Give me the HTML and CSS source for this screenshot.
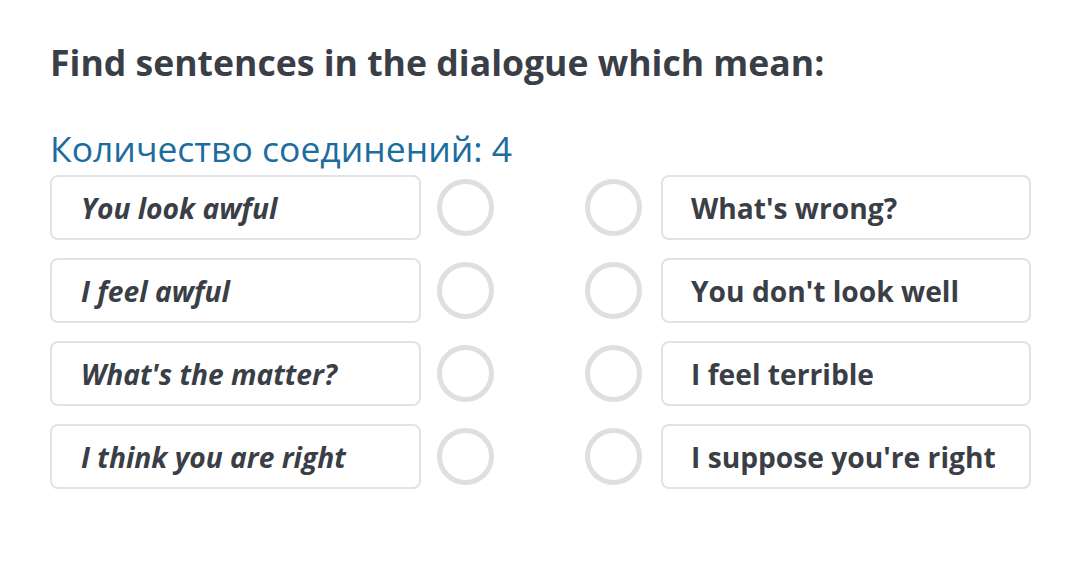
FILE: index.html
```html
<!DOCTYPE html>
<html lang="en">
<head>
<meta charset="utf-8">
<title>Find sentences</title>
<link rel="stylesheet" href="styles.css">
</head>
<body>
<main class="task">
  <h1 class="title">Find sentences in the dialogue which mean:</h1>
  <p class="count">Количество соединений: 4</p>
  <div class="pairs">
    <div class="row">
      <div class="card card-left">You look awful</div>
      <span class="dot dot-left"></span>
      <span class="dot dot-right"></span>
      <div class="card card-right">What's wrong?</div>
    </div>
    <div class="row">
      <div class="card card-left">I feel awful</div>
      <span class="dot dot-left"></span>
      <span class="dot dot-right"></span>
      <div class="card card-right">You don't look well</div>
    </div>
    <div class="row">
      <div class="card card-left">What's the matter?</div>
      <span class="dot dot-left"></span>
      <span class="dot dot-right"></span>
      <div class="card card-right">I feel terrible</div>
    </div>
    <div class="row">
      <div class="card card-left">I think you are right</div>
      <span class="dot dot-left"></span>
      <span class="dot dot-right"></span>
      <div class="card card-right">I suppose you're right</div>
    </div>
  </div>
</main>
</body>
</html>
```
FILE: styles.css
```css
html, body {
  margin: 0;
  padding: 0;
  background: #ffffff;
}
body {
  font-family: "Open Sans", "Liberation Sans", sans-serif;
  color: #3a3e46;
}
.task {
  padding: 40px 0 0 50px;
}
.title {
  margin: 0;
  font-size: 35.6px;
  line-height: 44px;
  font-weight: 700;
  color: #3a3e46;
}
.count {
  margin: 42px 0 0 0;
  font-size: 35.5px;
  line-height: 44px;
  font-weight: 400;
  color: #1c6d9e;
}
.pairs {
  margin-top: 5px;
  display: flex;
  flex-direction: column;
  gap: 18px;
}
.row {
  display: flex;
  align-items: center;
}
.card {
  box-sizing: border-box;
  height: 65px;
  border: 2px solid #e0e3e6;
  border-radius: 8px;
  background: #fff;
  display: flex;
  align-items: center;
  padding-left: 29px;
  font-size: 28.2px;
  font-weight: 700;
  color: #3a3e46;
  white-space: nowrap;
}
.card-left {
  width: 371px;
  font-style: italic;
}
.card-right {
  width: 370px;
  margin-left: 19px;
  padding-left: 28px;
}
.dot {
  box-sizing: border-box;
  width: 57px;
  height: 57px;
  border: 5px solid #dde0e3;
  border-radius: 50%;
  background: #fff;
}
.dot-left {
  margin-left: 16px;
}
.dot-right {
  margin-left: 91px;
}
```
